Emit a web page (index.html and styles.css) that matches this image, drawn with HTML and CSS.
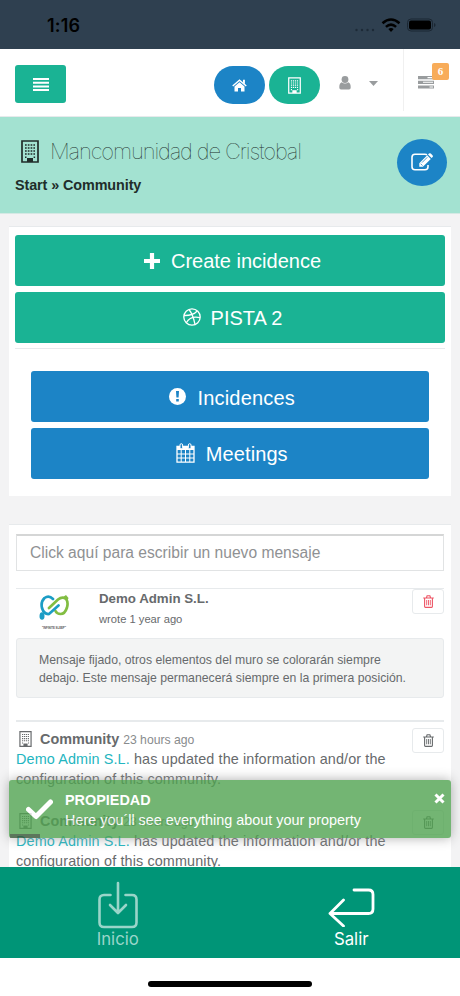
FILE: index.html
```html
<!DOCTYPE html>
<html lang="en">
<head>
<meta charset="utf-8">
<title>Community</title>
<link rel="stylesheet" href="styles.css">
</head>
<body>
<svg class="defs" width="0" height="0">
  <symbol id="building" viewBox="0 0 18 23">
    <path d="M1 1h16v21H1z" fill="none" stroke="currentColor" stroke-width="1.7"/>
    <path d="M6 22v-4h6v4z" fill="currentColor"/>
    <path d="M4 5h10M4 8h10M4 11h10M4 14h10" stroke="currentColor" stroke-width="1.6" stroke-dasharray="1.7 1.1" fill="none"/>
    <path d="M4 17.2h1.5M12.6 17.2h1.5" stroke="currentColor" stroke-width="1.5"/>
  </symbol>
  <symbol id="trash" viewBox="0 0 11 13">
    <path d="M.2 3h10.6M3.4 3l.7-2.2h2.8L7.600 3M1.600 3v8.600q0 .8.8.8h6.200q.8 0 .8-.8V3" fill="none" stroke="currentColor" stroke-width="1.1"/>
    <path d="M3.7 5v5.3M5.5 5v5.3M7.3 5v5.3" stroke="currentColor" stroke-width=".9"/>
  </symbol>
</svg>

<header class="status">
  <span class="clock">1:16</span>
  <svg class="status-icons" width="84" height="18" viewBox="0 0 84 18">
    <g fill="#1d2a37"><circle cx="3.500" cy="13" r="1.200"/><circle cx="9" cy="13" r="1.200"/><circle cx="14.500" cy="13" r="1.200"/><circle cx="20" cy="13" r="1.200"/></g>
    <g fill="none" stroke="#000" stroke-width="2.500"><path d="M29.500 6.300q8.500-7.600 17 0"/><path d="M32.900 9.900q5.100-4.600 10.200 0"/></g>
    <path d="M35.300 12.100q2.700-2.200 5.400 0L38 15z"/>
    <rect x="54.500" y="2" width="25" height="12" rx="3.500" fill="none" stroke="#1b2733"/>
    <rect x="56" y="3.500" width="22" height="9" rx="2"/>
    <path d="M81 6v4q1.600-.6 1.600-2T81 6z" fill="#1b2733"/>
  </svg>
</header>

<nav class="navbar">
  <button class="menu"><svg width="16" height="13" viewBox="0 0 16 13"><path d="M0 1h16M0 4.700h16M0 8.400h16M0 12h16" stroke="#fff" stroke-width="2"/></svg></button>
  <div class="nav-right">
    <a class="pill blue"><svg width="15" height="13" viewBox="0 0 15 13"><path d="M.7 7L7.500 1.200 14.300 7" fill="none" stroke="#fff" stroke-width="1.400"/><path d="M11 .8h1.900v4.500L11 3.600zM2.500 7.500l5-4.200 5 4.200v4.900H9V9H6v3.400H2.500z" fill="#fff"/></svg></a>
    <a class="pill green"><svg width="13" height="17"><use href="#building"/></svg></a>
    <svg class="user" width="12" height="14" viewBox="0 0 12 14"><circle cx="6" cy="3.500" r="3.400"/><path d="M2.700 6.200Q6 9 9.300 6.200 11.800 7 11.700 11.500q0 2-1.700 2H2q-1.700 0-1.700-2Q.2 7 2.700 6.200z"/></svg>
    <svg class="caret" width="9" height="5" viewBox="0 0 9 5"><path d="M0 0h9L4.500 5z"/></svg>
    <div class="tasks">
      <svg width="16" height="13" viewBox="0 0 16 13"><path d="M0 0h16v3.200H0zM0 4.700h16v3.200H0zM0 9.400h16v3.200H0z"/><path d="M9.500 1.600H15M5 6.300h10M11.500 11H15" stroke="#fff" stroke-width="1.100"/></svg>
      <span class="badge">6</span>
    </div>
  </div>
</nav>

<section class="heading">
  <div>
    <h1><svg width="18" height="23"><use href="#building"/></svg><span>Mancomunidad de Cristobal</span></h1>
    <p class="crumbs">Start » Community</p>
  </div>
  <a class="edit"><svg width="22" height="19" viewBox="0 0 22 19"><path d="M16 1.800Q15 1.300 14 1.300H4Q1 1.300 1 4.300v9.400q0 3 3 3h10q3 0 3-3V12" fill="none" stroke="#fff" stroke-width="1.600"/><path d="M8.300 10.200L16.200 2.300l3.600 3.600-7.900 7.900H8.300zM17 1.500l1-1q.9-.7 1.800.1l1.700 1.700q.8.900.1 1.800l-1 1z" fill="#fff"/><path d="M9.600 10.700l1.900 1.900M11 9.600l5.300-5.300" stroke="#1c84c6" stroke-width=".8"/></svg></a>
</section>

<main class="content">
  <section class="card actions">
    <a class="btn green shift"><svg width="16" height="16" viewBox="0 0 16 16"><path d="M8 2v12M2 8h12" stroke="#fff" stroke-width="4.200" stroke-linecap="square"/></svg><span>Create incidence</span></a>
    <a class="btn green shift"><svg width="18" height="18" viewBox="0 0 18 18" fill="none" stroke="#fff" stroke-width="1.300"><circle cx="9" cy="9" r="8.200"/><path d="M6 1.500q4 5 6 14.800M1 7.500q9 .2 13.200-4.500M3.300 14.800Q7.500 7.500 17 9.700"/></svg><span>PISTA 2</span></a>
    <hr>
    <div class="inner">
      <a class="btn blue incidences"><svg width="17" height="17" viewBox="0 0 17 17"><circle cx="8.500" cy="8.500" r="8.500" fill="#fff"/><path d="M7 3h3l-.4 6.600H7.400zM7.200 11h2.600v2.500H7.200z" fill="#1c84c6"/></svg><span>Incidences</span></a>
      <a class="btn blue meetings"><svg width="19" height="20" viewBox="0 0 19 20"><path d="M1 3.500h17v15.700H1z" fill="none" stroke="#fff" stroke-width="1.300"/><path d="M1 3h17v4H1z" fill="#fff"/><path d="M5.200 6v13M9.500 6v13M13.800 6v13M1 11h17M1 15h17" stroke="#fff"/><rect x="4" y=".7" width="2.600" height="5" rx="1.300" fill="#1c84c6" stroke="#fff"/><rect x="12.400" y=".7" width="2.600" height="5" rx="1.300" fill="#1c84c6" stroke="#fff"/></svg><span>Meetings</span></a>
    </div>
  </section>

  <section class="card wall">
    <div class="composer"><span>Click aquí para escribir un nuevo mensaje</span></div>
    <article class="pinned">
      <div class="author">
        <svg class="avatar" width="30" height="37" viewBox="0 0 30 37">
          <g fill="none" stroke-width="2.700" stroke-linecap="round"><path d="M10 14l9-8.500q4.500-3.500 8-.5 2.500 3 1 8.500-2 6.500-6.500 6.500-3.500 0-5-3" stroke="#82bd42"/><path d="M14 5Q10 1 5.500 4 1.500 8 3 14q2 6.500 7 6l9.500-8.500" stroke="#1b9dc5"/></g>
          <path d="M24 3l3-2 2.500 3-1 2.500z" fill="#82bd42"/><ellipse cx="3" cy="22" rx="2.500" ry="3.800" fill="#1b9dc5"/>
          <text x="3" y="35" font-size="4" font-weight="bold" textLength="24" lengthAdjust="spacingAndGlyphs" fill="#555">"INFINITE SLEEP"</text>
        </svg>
        <div class="who"><strong>Demo Admin S.L.</strong><small>wrote 1 year ago</small></div>
        <button class="del red"><svg width="11" height="13"><use href="#trash"/></svg></button>
      </div>
      <p class="message">Mensaje fijado, otros elementos del muro se colorarán siempre<br>debajo. Este mensaje permanecerá siempre en la primera posición.</p>
    </article>
    <article class="event first">
      <div class="event-head"><svg width="13" height="16"><use href="#building"/></svg><strong>Community</strong><time>23 hours ago</time><button class="del"><svg width="11" height="13"><use href="#trash"/></svg></button></div>
      <p><a>Demo Admin S.L.</a> has updated the information and/or the<br>configuration of this community.</p>
    </article>
    <article class="event">
      <div class="event-head"><svg width="13" height="16"><use href="#building"/></svg><strong>Community</strong><time>23 hours ago</time><button class="del"><svg width="11" height="13"><use href="#trash"/></svg></button></div>
      <p><a>Demo Admin S.L.</a> has updated the information and/or the<br>configuration of this community.</p>
    </article>
  </section>
</main>

<footer class="tabs">
  <a class="tab dim"><svg width="40" height="48" viewBox="0 0 40 48" fill="none" stroke="currentColor" stroke-width="2.600" stroke-linecap="round" stroke-linejoin="round"><path d="M12.500 14H6q-4.500 0-4.500 4.500v23Q1.500 46 6 46h28q4.500 0 4.500-4.500v-23Q38.500 14 34 14h-6.500M20 2v29.500M12 24l8 8 8-8"/></svg><span>Inicio</span></a>
  <a class="tab"><svg width="48" height="48" viewBox="0 0 48 48" fill="none" stroke="currentColor" stroke-width="2.800" stroke-linecap="round" stroke-linejoin="round"><path d="M27 11h14.500q4.500 0 4.500 4.500V30q0 4.500-4.500 4.500H3M16.500 21L3 34.500 16.500 47"/></svg><span>Salir</span></a>
</footer>
<div class="home"><span></span></div>

<aside class="toast">
  <svg class="check" width="27" height="21" viewBox="0 0 27 21"><path d="M2.500 10.500l7.500 7L24.500 3" fill="none" stroke="#fff" stroke-width="5" stroke-linejoin="round" stroke-linecap="round"/></svg>
  <div class="toast-text"><strong>PROPIEDAD</strong><span>Here you´ll see everything about your property</span></div>
  <svg class="close" width="11" height="11" viewBox="0 0 11 11"><path d="M1.500 1.500l8 8M9.500 1.500l-8 8" stroke="#fff" stroke-width="3"/></svg>
  <i class="progress"></i>
</aside>
</body>
</html>
```

FILE: styles.css
```css
* { box-sizing: border-box; }
html, body { margin: 0; }
body {
  position: relative;
  display: flex;
  flex-direction: column;
  width: 460px;
  height: 996px;
  overflow: hidden;
  background: #f3f3f4;
  color: #676a6c;
  font: 14.4px/20px "Liberation Sans", Arial, sans-serif;
}
.defs { position: absolute; }
h1, p, hr { margin: 0; }
svg { display: block; flex: none; }
button { padding: 0; font: inherit; }
span, strong, small, time { white-space: nowrap; }

.status {
  display: flex;
  flex: none;
  justify-content: space-between;
  height: 49px;
  padding: 15px 23px 0 47px;
  background: #2f4050;
}
.clock { color: #000; font: 600 18px/21px Inter, sans-serif; letter-spacing: .15px; }
.status-icons { margin-top: 2px; }

.navbar {
  display: flex;
  flex: none;
  justify-content: space-between;
  height: 68px;
  padding-left: 15px;
  background: #fff;
  border-bottom: 1px solid #e7eaec;
}
.menu {
  display: grid;
  place-items: center;
  width: 51px;
  height: 38px;
  margin-top: 16px;
  border: 0;
  border-radius: 3px;
  background: #1ab394;
}
.nav-right { display: flex; align-items: flex-start; }
.pill {
  display: grid;
  place-items: center;
  width: 51px;
  height: 38px;
  margin: 17px 4px 0 0;
  border-radius: 19px;
  color: #fff;
}
.blue { background: #1c84c6; }
.green { background: #1ab394; }
.user { margin: 27px 0 0 15px; fill: #999c9e; }
.caret { margin: 32px 25px 0 18px; fill: #999c9e; }
.tasks {
  position: relative;
  width: 57px;
  height: 62px;
  padding: 27px 0 0 14px;
  border-left: 1px solid #f0f0f0;
  fill: #999c9e;
}
.badge {
  position: absolute;
  top: 14px;
  left: 28px;
  width: 17px;
  height: 17px;
  border-radius: 2px;
  background: #f8ac59;
  color: #fff;
  font: bold 11px/17px "Liberation Serif", serif;
  text-align: center;
}

.heading {
  display: flex;
  flex: none;
  justify-content: space-between;
  height: 97px;
  padding: 22px 13px 0 15px;
  background: #a3e2d1;
  border-bottom: 1px solid #d5e9e4;
  color: #212d2a;
}
h1 {
  display: flex;
  align-items: center;
  gap: 11px;
  height: 25px;
  padding-left: 6px;
  font: 100 22px/25px Inter, Roboto, sans-serif;
}
h1 span { letter-spacing: -1.12px; }
.crumbs { margin-top: 11px; font-weight: bold; letter-spacing: -.1px; }
.edit {
  display: grid;
  place-items: center;
  width: 50px;
  height: 47px;
  border-radius: 50%;
  background: #1c84c6;
}

.content { flex: 1; min-height: 0; padding: 12px 9px 0; overflow: hidden; }
.card { background: #fff; border-top: 1px solid #e7eaec; }
.actions { height: 270px; padding: 8px 6px 0; }
.btn {
  display: flex;
  align-items: center;
  justify-content: center;
  gap: 11px;
  height: 51px;
  margin-bottom: 5.500px;
  border-radius: 3px;
  color: #fff;
  font-size: 20px;
}
.btn span { padding-top: 1px; }
.shift { padding-left: 5px; }
.shift + .shift { gap: 10px; }
.incidences { padding-left: 5px; letter-spacing: .2px; }
.incidences span { padding-top: 2px; }
.meetings { gap: 11px; padding-left: 4px; letter-spacing: .1px; }
.actions hr { height: 1px; border: 0; background: #e7eaec; }
.inner { padding: 22px 16.500px 0 16px; }

.wall { height: 400px; margin-top: 28px; padding: 9px 7px 0; }
.composer {
  height: 37px;
  padding: 1px 13px;
  border: 1px solid #e1e3e4;
  border-top: 2px solid #d5d6d6;
  color: #8f9193;
  font-size: 15.600px;
  line-height: 32px;
}
.pinned { margin-top: 17px; border-top: 1px solid #e7eaec; }
.author { display: flex; height: 49px; }
.avatar { margin: 5px 0 0 23px; }
.who { display: flex; flex: 1; flex-direction: column; padding-left: 30px; }
.who strong { font-size: 13.300px; line-height: 20px; }
.who small { font-size: 11.200px; line-height: 20px; }
.del {
  display: grid;
  place-items: center;
  width: 32px;
  height: 25px;
  border: 1px solid #e7eaec;
  border-radius: 3px;
  background: #fff;
  color: #676a6c;
}
.del.red { color: #ed5565; }
.message {
  height: 60px;
  padding: 12px 22px;
  border: 1px solid #e7eaec;
  border-radius: 3px;
  background: #f3f4f4;
  font-size: 12.250px;
  line-height: 18px;
  white-space: nowrap;
}
.event { height: 82px; }
.event.first { height: 89px; margin-top: 22px; padding-top: 6px; border-top: 2px solid #e7eaec; }
.event-head { display: flex; height: 21px; }
.event-head svg { margin-top: 3px; }
.event-head > svg { margin: 3px 8px 0 3px; }
.event-head .del { margin-left: auto; }
.event-head .del svg { margin: 0; }
.event-head strong { line-height: 23px; }
.event-head time { margin-left: 4px; color: #888b8d; font-size: 12.200px; line-height: 24px; }
.event p { letter-spacing: .12px; white-space: nowrap; }
.event a { color: #23b5c0; }
.event + .event { padding-top: 1px; }

.tabs { display: flex; flex: none; height: 91px; background: #009577; color: #fff; }
.tab {
  display: flex;
  flex: 1;
  flex-direction: column;
  align-items: center;
  padding: 14px 0 0 5px;
  font: 17px/20px Inter, sans-serif;
}
.tab span { font-size: 16.800px; }
.tab.dim { padding-left: 5px; margin-left: 2.500px; margin-right: -2.500px; color: #99d5c9; }
.tab:last-child { padding: 12px 0 0 14px; margin-left: 1.500px; margin-right: -1.500px; }
.tab:last-child span { margin-top: 2px; }
.home { display: flex; flex: none; justify-content: center; height: 38px; padding-top: 23px; background: #fff; }
.home span { width: 164px; height: 6px; border-radius: 3px; background: #000; }

.toast {
  position: absolute;
  top: 780px;
  left: 9px;
  display: flex;
  width: 442px;
  height: 58px;
  padding: 10px 6px 0 17px;
  border-radius: 3px;
  background: #51a351;
  box-shadow: 0 0 12px #999;
  color: #fff;
  opacity: .8;
}
.check { margin-top: 9px; }
.toast-text { display: flex; flex: 1; flex-direction: column; padding-left: 12px; }
.close { margin-top: 3px; }
.progress { position: absolute; bottom: 0; left: 1px; width: 30px; height: 4px; background: #222; opacity: .6; }
```
